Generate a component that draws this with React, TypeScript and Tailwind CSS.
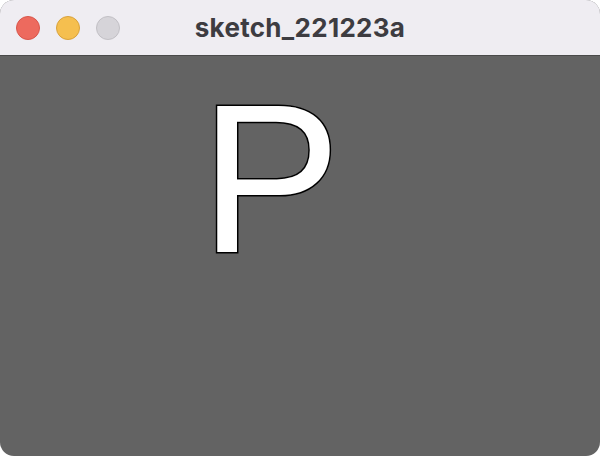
import React from 'react';

const App = () => {
  return (
    <div className="w-[600px] h-[456px] bg-white">
      <div className="w-full h-full rounded-[14px] overflow-hidden flex flex-col bg-[#636363]">
        {/* Title bar */}
        <header className="relative h-[56px] shrink-0 bg-[#efedf2] border-b border-[#4a4a4a] flex items-center px-4">
          <div className="flex gap-[16px]">
            <span className="w-[24px] h-[24px] rounded-full bg-[#ed6a5e] border border-[#d9564b]" />
            <span className="w-[24px] h-[24px] rounded-full bg-[#f5bf4f] border border-[#d9a23c]" />
            <span className="w-[24px] h-[24px] rounded-full bg-[#d6d4d9] border border-[#c2c0c5]" />
          </div>
          <h1 className="absolute left-0 right-0 text-center text-[26px] font-bold text-[#3d3c41] font-['Inter',sans-serif] tracking-[0.3px]">
            sketch_221223a
          </h1>
        </header>

        {/* Sketch canvas */}
        <main className="flex-1 pl-[200px] pt-[18px]">
          <p className="text-[211px] leading-none text-white font-['Liberation_Sans',Arial,sans-serif] [-webkit-text-stroke:3px_black] [paint-order:stroke_fill]">
            P
          </p>
        </main>
      </div>
    </div>
  );
};

export default App;
